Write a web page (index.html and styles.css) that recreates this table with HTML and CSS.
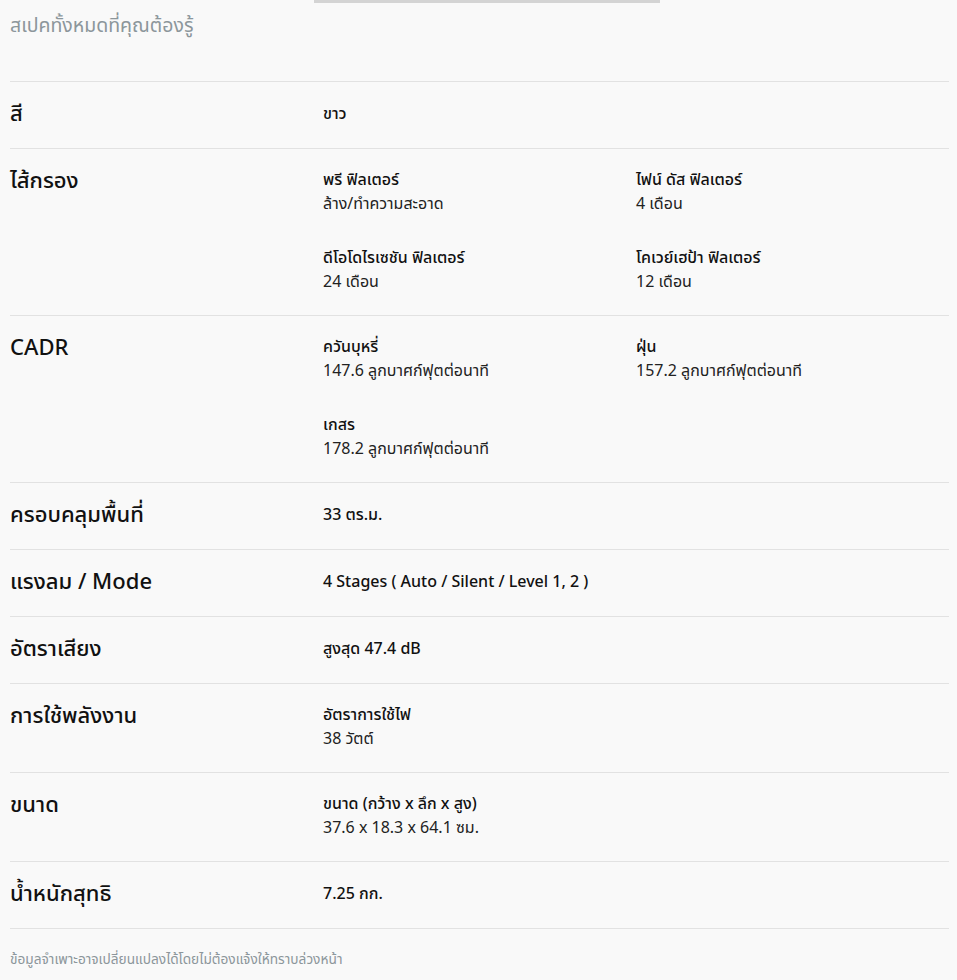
FILE: index.html
```html
<!DOCTYPE html>
<html lang="th">
<head>
  <meta charset="UTF-8">
  <meta name="viewport" content="width=device-width, initial-scale=1.0">
  <title>สเปคทั้งหมด</title>
  <link rel="stylesheet" href="styles.css">
</head>
<body>
  <div class="tab-line"></div>
  <div class="specs">
    <h2 class="specs-title">สเปคทั้งหมดที่คุณต้องรู้</h2>

    <div class="spec-row">
      <div class="spec-label">สี</div>
      <div class="spec-values">
        <div class="spec-item"><span class="val">ขาว</span></div>
      </div>
    </div>

    <div class="spec-row">
      <div class="spec-label">ไส้กรอง</div>
      <div class="spec-values grid">
        <div class="spec-item"><span class="name">พรี ฟิลเตอร์</span><span class="sub">ล้าง/ทำความสะอาด</span></div>
        <div class="spec-item"><span class="name">ไฟน์ ดัส ฟิลเตอร์</span><span class="sub">4 เดือน</span></div>
        <div class="spec-item"><span class="name">ดีโอโดไรเซชัน ฟิลเตอร์</span><span class="sub">24 เดือน</span></div>
        <div class="spec-item"><span class="name">โคเวย์เฮป้า ฟิลเตอร์</span><span class="sub">12 เดือน</span></div>
      </div>
    </div>

    <div class="spec-row">
      <div class="spec-label">CADR</div>
      <div class="spec-values grid">
        <div class="spec-item"><span class="name">ควันบุหรี่</span><span class="sub">147.6 ลูกบาศก์ฟุตต่อนาที</span></div>
        <div class="spec-item"><span class="name">ฝุ่น</span><span class="sub">157.2 ลูกบาศก์ฟุตต่อนาที</span></div>
        <div class="spec-item"><span class="name">เกสร</span><span class="sub">178.2 ลูกบาศก์ฟุตต่อนาที</span></div>
      </div>
    </div>

    <div class="spec-row">
      <div class="spec-label">ครอบคลุมพื้นที่</div>
      <div class="spec-values">
        <div class="spec-item"><span class="val">33 ตร.ม.</span></div>
      </div>
    </div>

    <div class="spec-row">
      <div class="spec-label">แรงลม / Mode</div>
      <div class="spec-values">
        <div class="spec-item"><span class="val">4 Stages ( Auto / Silent / Level 1, 2 )</span></div>
      </div>
    </div>

    <div class="spec-row">
      <div class="spec-label">อัตราเสียง</div>
      <div class="spec-values">
        <div class="spec-item"><span class="val">สูงสุด 47.4 dB</span></div>
      </div>
    </div>

    <div class="spec-row">
      <div class="spec-label">การใช้พลังงาน</div>
      <div class="spec-values">
        <div class="spec-item"><span class="name">อัตราการใช้ไฟ</span><span class="sub">38 วัตต์</span></div>
      </div>
    </div>

    <div class="spec-row">
      <div class="spec-label">ขนาด</div>
      <div class="spec-values">
        <div class="spec-item"><span class="name">ขนาด (กว้าง x ลึก x สูง)</span><span class="sub">37.6 x 18.3 x 64.1 ซม.</span></div>
      </div>
    </div>

    <div class="spec-row">
      <div class="spec-label">น้ำหนักสุทธิ</div>
      <div class="spec-values">
        <div class="spec-item"><span class="val">7.25 กก.</span></div>
      </div>
    </div>

    <p class="specs-note">ข้อมูลจำเพาะอาจเปลี่ยนแปลงได้โดยไม่ต้องแจ้งให้ทราบล่วงหน้า</p>
  </div>
</body>
</html>
```

FILE: styles.css
```css
/* 기본 */
body {
  margin: 0;
  background: #f9f9f9;
  color: #111;
  font-family: "Noto Sans", "Noto Sans Thai", sans-serif;
}
.tab-line {
  width: 346px;
  height: 3px;
  margin-left: 314px;
  background: #d4d4d4;
}
.specs {
  margin: 0 8px 0 10px;
}
.specs-title {
  margin: 0;
  padding: 9px 0 0;
  height: 79px;
  box-sizing: border-box;
  font-size: 19.5px;
  font-weight: normal;
  line-height: 26px;
  color: #8c969b;
  border-bottom: 1px solid #e2e2e2;
}
/* 스펙 행 */
.spec-row {
  display: flex;
  padding: 18px 0 22px;
  border-bottom: 1px solid #e2e2e2;
}
.spec-label {
  width: 313px;
  flex-shrink: 0;
  margin-top: -1px;
  font-size: 22px;
  font-weight: 500;
  line-height: 26px;
}
.spec-values {
  flex: 1;
}
.spec-values.grid {
  display: grid;
  grid-template-columns: 313px 1fr;
  row-gap: 30px;
}
.spec-item {
  display: flex;
  flex-direction: column;
}
.spec-item .val {
  font-size: 16px;
  font-weight: 500;
  line-height: 26px;
}
.spec-item .name {
  font-size: 16px;
  font-weight: 500;
  line-height: 24px;
}
.spec-item .sub {
  font-size: 16px;
  line-height: 24px;
  color: #222;
}
.specs-note {
  margin: 20px 0 0;
  font-size: 13.7px;
  color: #8c969b;
}
```
